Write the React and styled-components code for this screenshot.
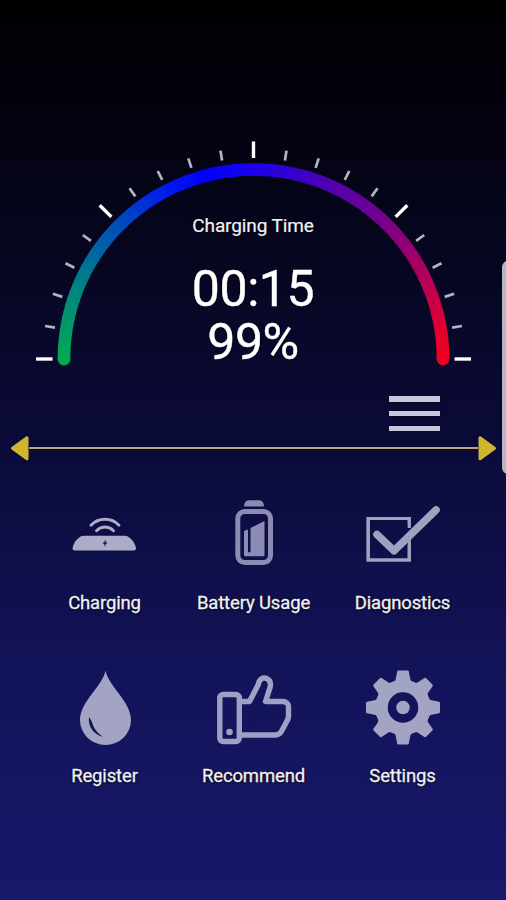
import styled, { createGlobalStyle } from 'styled-components';

const GlobalStyle = createGlobalStyle`
   * {
      box-sizing: border-box;
   }

   body {
      margin: 0;
      background: #000;
      font-family: Roboto, sans-serif;
   }
`

const Screen = styled.main`
   position: relative;
   display: flex;
   flex-direction: column;
   width: 506px;
   height: 900px;
   padding-top: 130px;
   overflow: hidden;
   color: #f0f0f5;
   background: linear-gradient(180deg, #000002 0%, #05051c 25%, #0b0b3a 50%, #13135a 75%, #18186c 100%);
`

const Gauge = styled.section`
   display: grid;
   height: 250px;

   > * {
      grid-area: 1 / 1;
   }
`

const Readout = styled.div`
   display: flex;
   flex-direction: column;
   align-items: center;
   padding-top: 84px;
   text-shadow: 0 0 2px #000;
`

const Caption = styled.span`
   font-size: 19px;
   line-height: 24px;
   letter-spacing: -0.12px;
   margin-bottom: 25px;
   -webkit-text-stroke: 0.2px currentColor;
`

const Value = styled.span`
   font-size: 50px;
   line-height: 53px;
   letter-spacing: -0.4px;
   color: #fff;
   -webkit-text-stroke: 0.4px currentColor;
`

const MenuBar = styled.div`
   display: flex;
   justify-content: flex-end;
   height: 54px;
   padding: 16px 66px 0 0;
`

const MenuButton = styled.button`
   display: flex;
   flex-direction: column;
   justify-content: space-between;
   width: 51px;
   height: 35px;
   padding: 0;
   border: none;
   background: none;

   span {
      height: 5.5px;
      background: #c6c6dc;
      box-shadow: 0 0 2px #000;
   }
`

const Divider = styled.div`
   display: flex;
   align-items: center;
   height: 28px;
   padding: 0 9px 0 10px;
`

const DividerLine = styled.div`
   flex: 1;
   height: 2px;
   background: #c0a676;
   box-shadow: 0 0 2px #000;
`

const Arrow = styled.svg`
   width: 19px;
   height: 28px;
   transform: ${({ $right }) => ($right ? 'scaleX(-1)' : 'none')};
`

const MenuGrid = styled.nav`
   display: grid;
   grid-template-columns: repeat(3, 149px);
   grid-auto-rows: 173px;
   padding: 33px 0 0 30px;
`

const MenuItem = styled.a`
   display: flex;
   flex-direction: column;
   align-items: center;
   font-size: 18.5px;
   line-height: 24px;
   letter-spacing: -0.15px;
   text-shadow: 0 0 2px #000, 0 1px 2px rgba(0, 0, 0, 0.6);
   white-space: nowrap;
   -webkit-text-stroke: 0.3px currentColor;
`

const Icon = styled.svg`
   width: 76px;
   height: 76px;
   margin-bottom: 20px;
   overflow: visible;
   fill: ${({ $tone }) => $tone};
   stroke: ${({ $tone }) => $tone};
   stroke-width: 0;
`

const EdgeHandle = styled.div`
   position: absolute;
   top: 261px;
   right: -8px;
   width: 12px;
   height: 213px;
   border-radius: 6px;
   background: #b6b6c4;
   box-shadow: 0 0 2px #000;
`

const CX = 253.5;
const CY = 229;
const R = 189.5;

// [angle, r, g, b], angle runs clockwise from the left end
const stops = [
   [0, 4, 168, 84],
   [22, 0, 132, 130],
   [45, 0, 76, 188],
   [62, 0, 28, 236],
   [75, 0, 0, 255],
   [90, 28, 0, 238],
   [112, 78, 0, 176],
   [135, 122, 0, 134],
   [157, 186, 0, 82],
   [172, 226, 0, 42],
   [180, 238, 0, 34],
];

const colorAt = (angle) => {
   const i = Math.max(1, stops.findIndex((s) => s[0] >= angle));
   const a = stops[i - 1];
   const b = stops[i];
   const t = (angle - a[0]) / (b[0] - a[0]);
   const rgb = [1, 2, 3].map((n) => Math.round(a[n] + (b[n] - a[n]) * t));
   return `rgb(${rgb.join(',')})`;
}

const point = (angle, r) => {
   const rad = (angle * Math.PI) / 180;
   return [CX - r * Math.cos(rad), CY - r * Math.sin(rad)];
}

const segments = Array.from({ length: 90 }, (_, i) => i * 2);
const ticks = Array.from({ length: 21 }, (_, i) => i);

const GaugeArc = () => (
   <svg width="506" height="250" viewBox="0 0 506 250" fill="none">
      {[0, 180].map((angle) => {
         const [x, y] = point(angle, R);
         return <circle key={angle} cx={x} cy={y} r="6.4" fill={colorAt(angle)} />;
      })}
      {segments.map((angle) => {
         const end = Math.min(180, angle + 2.6);
         return (
            <path
               key={angle}
               d={`M${point(angle, R).join(' ')}A${R} ${R} 0 0 1 ${point(end, R).join(' ')}`}
               stroke={colorAt(angle + 1)}
               strokeWidth="12.6"
            />
         );
      })}
      {ticks.map((i) => {
         const major = i % 5 === 0;
         const [x1, y1] = point(i * 9, 201);
         const [x2, y2] = point(i * 9, major ? 217.5 : 211);
         return (
            <line
               key={i}
               x1={x1} y1={y1} x2={x2} y2={y2}
               stroke={major ? '#fff' : '#b4b4c0'}
               strokeWidth={major ? 3.4 : 2.7}
            />
         );
      })}
   </svg>
)

const ChargingIcon = () => (
   <Icon viewBox="0 0 76 76" $tone="#acacc9">
      <path d="M5.500 53c1-5 4-9 8-11.500q1.500-.7 3.500-.7h40.500q2 0 3.500.7c4 2.500 7 6.500 8 11.500q0 2.500-2.500 2.500H8Q5.500 55.500 5.500 53z" />
      <path d="M24 30.300c7.500-8 20.500-8 28 0M29.500 35.700c5-5 12-5 17 0" fill="none" strokeWidth="2.900" strokeLinecap="round" />
      <path d="M39 44.700l-3.500 4.100h2.100l-.6 3 3.500-4.300h-2.100z" fill="#15153f" />
   </Icon>
)

const BatteryIcon = () => (
   <Icon viewBox="0 0 76 76" $tone="#8b8bb3">
      <path d="M28 11.500c0-4 2-6.300 5-6.300h10c3 0 5 2.300 5 6.300z" />
      <rect x="21.800" y="16.500" width="32.700" height="51" rx="7" fill="none" strokeWidth="5" />
      <path d="M28 36l4-1.500v22.700h2.500V33L48.500 26v34q0 1.300-1.300 1.300H29.300Q28 61.300 28 60z" />
   </Icon>
)

const DiagnosticsIcon = () => (
   <Icon viewBox="0 0 76 76" $tone="#a0a0bf">
      <path d="M44.300 33V23.500H3.200V65H44.300V45" fill="none" strokeWidth="3.200" />
      <path d="M12 39.500L29.500 56.300L71 15" fill="none" stroke="#0f0f48" strokeWidth="10" strokeLinecap="round" strokeLinejoin="round" />
      <path d="M44.300 44V65H3.200V23.500H44.300V30" fill="none" strokeWidth="3.200" />
      <path d="M12 39.500L29 55.800L71 15" fill="none" strokeWidth="7.600" strokeLinecap="round" strokeLinejoin="round" />
   </Icon>
)

const RegisterIcon = () => (
   <Icon viewBox="0 0 76 76" $tone="#a3a3c4">
      <path d="M38.500 2.500c2.500 15 25.500 31 25.500 49.500a25.500 25 0 0 1-51 0C13 33.500 36 17.500 38.500 2.500z" />
      <path d="M22 49.300c-1.300 9 4.500 17.500 14 19.400-6-4-9-8-10.300-12.400-.8-2.800-2-5-3.700-7z" fill="#13134f" />
   </Icon>
)

const RecommendIcon = () => (
   <Icon viewBox="0 0 76 76" $tone="#a0a0c4">
      <g fill="none" strokeWidth="5.400" strokeLinejoin="round">
         <rect x="3.800" y="26.500" width="19.500" height="47" rx="3.500" />
         <path d="M24 33.500h9.500l8.800-17c1-5.800 5-7.500 8.300-6 4 1.700 4.500 5.200 3.400 9.200l-4.500 13.800h17.200c3.500 0 5.800 2 5.800 5.500v9c0 1.500-.3 2.500-1 4l-6 11.300c-1.500 2.700-3 3.700-6 3.700H24" />
      </g>
      <circle cx="13.500" cy="64" r="3.300" />
   </Icon>
)

const SettingsIcon = () => (
   <Icon viewBox="0 0 76 76" $tone="#a3a3c4">
      <circle cx="38" cy="39.500" r="21.500" fill="none" strokeWidth="12.500" />
      {[0, 45, 90, 135, 180, 225, 270, 315].map((angle) => (
         <path
            key={angle}
            d="M28 15l2.500-3 1.700-8.500q.2-1 1.200-1h9.200q1 0 1.200 1l1.700 8.500 2.500 3z"
            transform={`rotate(${angle} 38 39.500)`}
         />
      ))}
      <circle cx="38" cy="39.500" r="6.800" />
   </Icon>
)

const items = [
   { label: 'Charging', icon: ChargingIcon },
   { label: 'Battery Usage', icon: BatteryIcon },
   { label: 'Diagnostics', icon: DiagnosticsIcon },
   { label: 'Register', icon: RegisterIcon },
   { label: 'Recommend', icon: RecommendIcon },
   { label: 'Settings', icon: SettingsIcon },
];

const ArrowHead = ({ right }) => (
   <Arrow viewBox="0 0 19 28" $right={right}>
      <path d="M2.500 14.300L17 3.800V24.800z" fill="#d2b52e" stroke="#d2b52e" strokeWidth="3" strokeLinejoin="round" />
   </Arrow>
)

export default function App() {
   return (
      <>
         <GlobalStyle />
         <Screen>
            <Gauge>
               <GaugeArc />
               <Readout>
                  <Caption>Charging Time</Caption>
                  <Value>00:15</Value>
                  <Value>99%</Value>
               </Readout>
            </Gauge>
            <MenuBar>
               <MenuButton aria-label="Menu">
                  <span />
                  <span />
                  <span />
               </MenuButton>
            </MenuBar>
            <Divider>
               <ArrowHead />
               <DividerLine />
               <ArrowHead right />
            </Divider>
            <MenuGrid>
               {items.map(({ label, icon: ItemIcon }) => (
                  <MenuItem key={label}>
                     <ItemIcon />
                     {label}
                  </MenuItem>
               ))}
            </MenuGrid>
            <EdgeHandle />
         </Screen>
      </>
   )
}
